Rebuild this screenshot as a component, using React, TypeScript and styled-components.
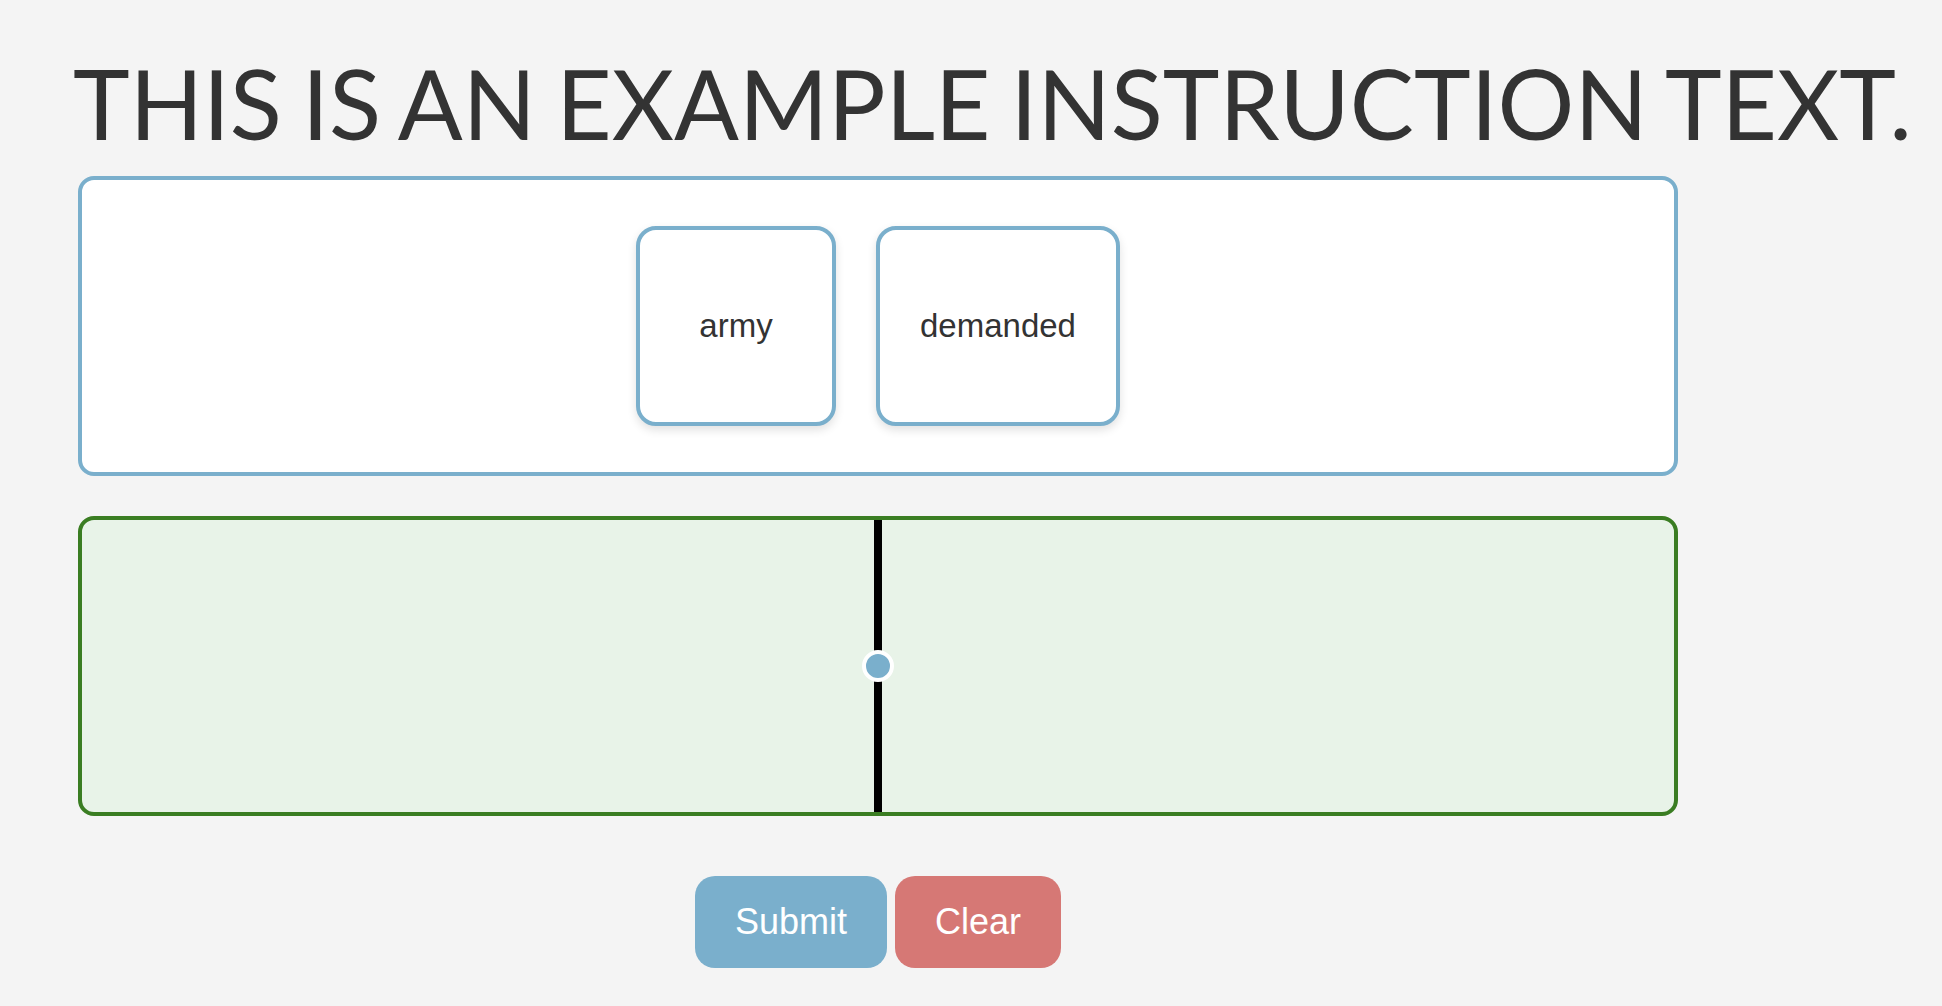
import React from "react";
import styled, { createGlobalStyle } from "styled-components";

const GlobalStyle = createGlobalStyle`
  html, body {
    margin: 0;
    padding: 0;
    background: #f4f4f4;
  }
  body {
    font-family: "Liberation Sans", Arial, sans-serif;
    color: #333333;
  }
`;

const Page = styled.main`
  display: flex;
  flex-direction: column;
  align-items: flex-start;
  padding: 0 0 40px 78px;
  min-height: 1006px;
  box-sizing: border-box;
`;

const Title = styled.h1`
  margin: 45px 0 15px -5px;
  font-family: Lato, "Open Sans", sans-serif;
  font-weight: 400;
  font-size: 96px;
  line-height: 116px;
  word-spacing: -4.5px;
  color: #333333;
  white-space: nowrap;
`;

const Panel = styled.section<{ $variant: "source" | "target" }>`
  box-sizing: border-box;
  width: 1600px;
  height: 300px;
  border: 4px solid ${(p) => (p.$variant === "source" ? "#7aafcc" : "#3a7d22")};
  background: ${(p) => (p.$variant === "source" ? "#ffffff" : "#e8f3e8")};
  border-radius: 16px;
  display: flex;
  align-items: center;
  justify-content: center;
  gap: 40px;
  position: relative;
  & + & {
    margin-top: 40px;
  }
`;

const Card = styled.div`
  box-sizing: border-box;
  min-width: 200px;
  height: 200px;
  padding: 0 40px;
  display: flex;
  align-items: center;
  justify-content: center;
  background: #ffffff;
  border: 4px solid #7aafcc;
  border-radius: 20px;
  box-shadow: 0 4px 10px rgba(0, 0, 0, 0.12);
  font-family: "Liberation Sans", Arial, sans-serif;
  font-size: 33px;
  color: #333333;
`;

const Divider = styled.div`
  align-self: stretch;
  width: 8px;
  background: #000000;
  display: flex;
  align-items: center;
  justify-content: center;
  position: relative;
`;

const Handle = styled.span`
  position: absolute;
  width: 24px;
  height: 24px;
  border-radius: 50%;
  background: #7aafcc;
  border: 4px solid #ffffff;
`;

const Actions = styled.div`
  width: 1600px;
  display: flex;
  justify-content: center;
  gap: 8px;
  margin-top: 60px;
`;

const Button = styled.button<{ $tone: "primary" | "danger" }>`
  height: 92px;
  padding: 0 40px;
  border: none;
  border-radius: 20px;
  background: ${(p) => (p.$tone === "primary" ? "#7aafcc" : "#d67875")};
  color: #ffffff;
  font-family: "Liberation Sans", Arial, sans-serif;
  font-size: 36px;
  cursor: pointer;
`;

export default function App() {
  return (
    <>
      <GlobalStyle />
      <Page>
        <Title>THIS IS AN EXAMPLE INSTRUCTION TEXT.</Title>
        <Panel $variant="source">
          <Card>army</Card>
          <Card>demanded</Card>
        </Panel>
        <Panel $variant="target">
          <Divider>
            <Handle />
          </Divider>
        </Panel>
        <Actions>
          <Button $tone="primary">Submit</Button>
          <Button $tone="danger">Clear</Button>
        </Actions>
      </Page>
    </>
  );
}
